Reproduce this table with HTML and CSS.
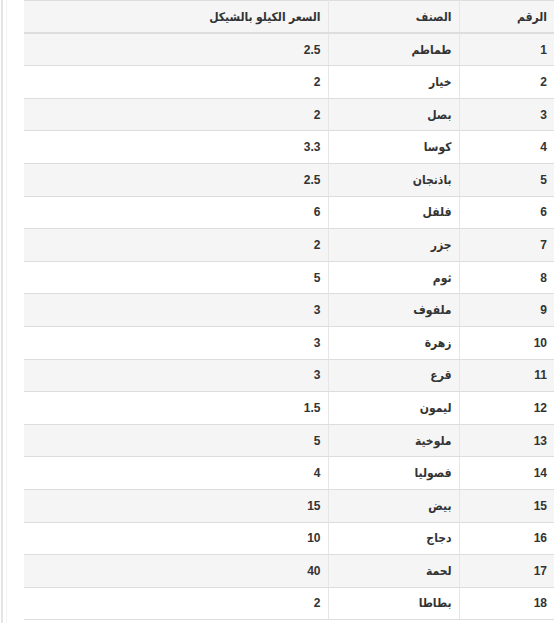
FILE: index.html
```html
<!DOCTYPE html>
<html lang="ar" dir="rtl">
<head>
<meta charset="utf-8">
<title>أسعار الخضار</title>
<link rel="stylesheet" href="styles.css">
</head>
<body>
<div class="frame">
  <div class="inner">
    <table class="prices">
      <colgroup>
        <col class="c-num">
        <col class="c-item">
        <col class="c-price">
      </colgroup>
      <thead>
        <tr><th>الرقم</th><th>الصنف</th><th>السعر الكيلو بالشيكل</th></tr>
      </thead>
      <tbody>
        <tr><td>1</td><td>طماطم</td><td>2.5</td></tr>
        <tr><td>2</td><td>خيار</td><td>2</td></tr>
        <tr><td>3</td><td>بصل</td><td>2</td></tr>
        <tr><td>4</td><td>كوسا</td><td>3.3</td></tr>
        <tr><td>5</td><td>باذنجان</td><td>2.5</td></tr>
        <tr><td>6</td><td>فلفل</td><td>6</td></tr>
        <tr><td>7</td><td>جزر</td><td>2</td></tr>
        <tr><td>8</td><td>ثوم</td><td>5</td></tr>
        <tr><td>9</td><td>ملفوف</td><td>3</td></tr>
        <tr><td>10</td><td>زهرة</td><td>3</td></tr>
        <tr><td>11</td><td>قرع</td><td>3</td></tr>
        <tr><td>12</td><td>ليمون</td><td>1.5</td></tr>
        <tr><td>13</td><td>ملوخية</td><td>5</td></tr>
        <tr><td>14</td><td>فصوليا</td><td>4</td></tr>
        <tr><td>15</td><td>بيض</td><td>15</td></tr>
        <tr><td>16</td><td>دجاج</td><td>10</td></tr>
        <tr><td>17</td><td>لحمة</td><td>40</td></tr>
        <tr><td>18</td><td>بطاطا</td><td>2</td></tr>
      </tbody>
    </table>
  </div>
</div>
</body>
</html>
```
FILE: styles.css
```css
html, body {
  margin: 0;
  padding: 0;
  background: #ffffff;
}

body {
  font-family: "Liberation Sans", "DejaVu Sans Condensed", "DejaVu Sans", sans-serif;
  font-size: 12px;
  color: #333333;
}

.frame {
  direction: ltr;
  margin-left: 1px;
  border-left: 2px solid #e4e4e4;
  padding-left: 3px;
  min-height: 623px;
  box-sizing: border-box;
}

.inner {
  border-left: 1px solid #f3f3f3;
  padding-left: 17px;
  min-height: 623px;
  box-sizing: border-box;
}

.prices {
  direction: rtl;
  width: 530px;
  border-collapse: collapse;
  table-layout: fixed;
  border-top: 1px solid #dddddd;
}

.c-num { width: 95px; }
.c-item { width: 131px; }
.c-price { width: 304px; }

.prices th,
.prices td {
  height: 32.6px;
  padding: 0 7px;
  text-align: right;
  vertical-align: middle;
  font-weight: bold;
  line-height: 16px;
  border-bottom: 1px solid #dddddd;
  border-left: 1px solid #e6e6e6;
  box-sizing: border-box;
}

.prices th:last-child,
.prices td:last-child {
  border-left: none;
}

.prices thead th {
  background: #f5f5f5;
  border-bottom: 2px solid #dddddd;
}

.prices tbody tr:nth-child(odd) td {
  background: #f5f5f5;
}
```
